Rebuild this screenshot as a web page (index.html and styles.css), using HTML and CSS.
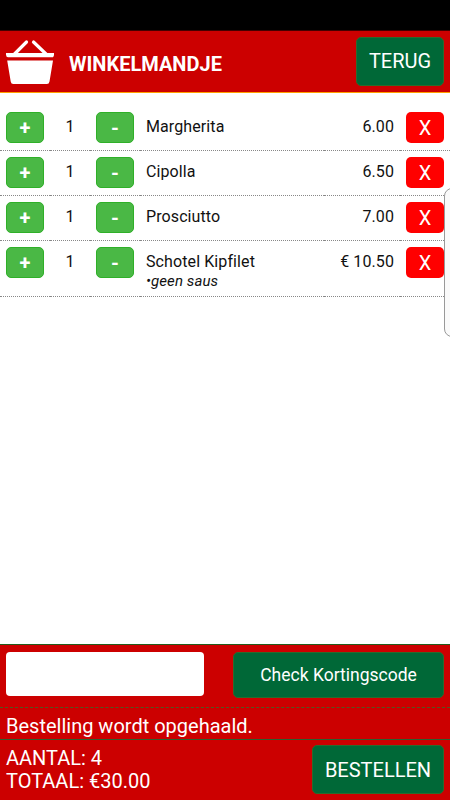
FILE: index.html
```html
<!DOCTYPE html>
<html lang="nl">
<head>
  <meta charset="UTF-8" />
  <meta name="viewport" content="width=device-width, initial-scale=1" />
  <title>Winkelmandje</title>
  <link rel="stylesheet" href="styles.css">
</head>
<body>
  <div class="statusbar"></div>

  <header class="header">
    <svg class="basket" width="50" height="46" viewBox="0 0 50 46">
      <path d="M8.500 15 L20.500 3 M40 15 L27.500 3" fill="none" stroke="#fff" stroke-width="3.200" stroke-linecap="round"/>
      <path d="M0 14h48q.3 4.300-2 4.300h-44q-2.300 0-2-4.300z" fill="#fff"/>
      <path d="M1.200 21.500h45.800l-3.500 21q-.4 2.500-2.600 2.500h-33.600q-2.200 0-2.600-2.500z" fill="#fff"/>
    </svg>
    <h1>WINKELMANDJE</h1>
    <button class="button back">TERUG</button>
  </header>

  <main class="cart">
    <div class="row">
      <div class="cell"><button class="qty">+</button></div>
      <div class="cell count">1</div>
      <div class="cell"><button class="qty">-</button></div>
      <div class="cell name">Margherita</div>
      <div class="cell price">6.00</div>
      <div class="cell"><button class="remove">X</button></div>
    </div>
    <div class="row">
      <div class="cell"><button class="qty">+</button></div>
      <div class="cell count">1</div>
      <div class="cell"><button class="qty">-</button></div>
      <div class="cell name">Cipolla</div>
      <div class="cell price">6.50</div>
      <div class="cell"><button class="remove">X</button></div>
    </div>
    <div class="row">
      <div class="cell"><button class="qty">+</button></div>
      <div class="cell count">1</div>
      <div class="cell"><button class="qty">-</button></div>
      <div class="cell name">Prosciutto</div>
      <div class="cell price">7.00</div>
      <div class="cell"><button class="remove">X</button></div>
    </div>
    <div class="row with-note">
      <div class="cell"><button class="qty">+</button></div>
      <div class="cell count">1</div>
      <div class="cell"><button class="qty">-</button></div>
      <div class="cell name">Schotel Kipfilet<div class="note">•geen saus</div></div>
      <div class="cell price">€ 10.50</div>
      <div class="cell"><button class="remove">X</button></div>
    </div>
  </main>

  <footer class="footer">
    <div class="coupon">
      <input class="code" type="text" aria-label="Kortingscode">
      <button class="button check">Check Kortingscode</button>
    </div>
    <div class="message">Bestelling wordt opgehaald.</div>
    <div class="total">
      <div class="sums">
        <div>AANTAL: 4</div>
        <div>TOTAAL: €30.00</div>
      </div>
      <button class="button order">BESTELLEN</button>
    </div>
  </footer>

  <!-- edge panel handle -->
  <div class="edge-handle"></div>
</body>
</html>
```

FILE: styles.css
```css
* {
  box-sizing: border-box;
}
body {
  margin: 0;
  height: 800px;
  display: flex;
  flex-direction: column;
  position: relative;
  overflow: hidden;
  background: #fff;
  color: #111;
  font-family: Roboto, sans-serif;
  font-size: 16px;
}
button {
  padding: 0;
  border: none;
  font-family: inherit;
  color: #fff;
}
.statusbar {
  height: 31px;
  background: #000;
  border-bottom: 1px solid #400;
}
.header {
  display: flex;
  align-items: flex-start;
  height: 62px;
  padding: 6px 6px 0 6px;
  background: #cc0000;
  border-bottom: 1px solid #ffa000;
}
.basket {
  margin-top: 2px;
}
.header h1 {
  flex: 1;
  margin: 15px 0 0 13px;
  font-size: 20px;
  line-height: 24px;
  font-weight: bold;
  color: #fff;
}
.button {
  background: #006837;
  border: 1px solid #2c6a2c;
  border-radius: 5px;
  font-size: 20px;
}
.back {
  width: 88px;
  height: 49px;
  padding-bottom: 1px;
}
.cart {
  flex: 1;
  padding-top: 13px;
}
.row {
  display: grid;
  grid-template-columns: 50px 40px 50px 184px 76px 50px;
  height: 45px;
}
.row.with-note {
  height: 56px;
}
.cell {
  padding: 6px 6px 0 6px;
  border-bottom: 1px dotted #888;
  letter-spacing: 0.1px;
  line-height: 19px;
}
.cell.count {
  padding: 11px 0 0 0;
  text-align: center;
}
.cell.name {
  padding-top: 11px;
}
.cell.price {
  padding-top: 11px;
  text-align: right;
}
.note {
  padding-top: 1px;
  font-size: 15px;
  font-style: italic;
}
.qty, .remove {
  display: block;
  width: 38px;
  height: 31px;
  border-radius: 5px;
  font-size: 20px;
}
.qty {
  background: #4ab845;
  border: 1px solid #2fb028;
  font-weight: bold;
}
.remove {
  background: #ff0000;
}
.footer {
  height: 156px;
  background: #cc0000;
  border-top: 1px solid #245a1c;
  color: #fff;
  font-size: 20px;
}
.coupon {
  display: flex;
  justify-content: space-between;
  align-items: flex-start;
  height: 63px;
  padding: 7px 6px 0 6px;
  border-bottom: 1px dashed #4f5a20;
}
.code {
  width: 198px;
  height: 44px;
  border: none;
  border-radius: 4px;
  background: #fff;
}
.check {
  width: 211px;
  height: 46px;
  padding-bottom: 1px;
  font-size: 17.5px;
}
.message {
  height: 32px;
  padding: 6px 6px 0 6px;
  border-bottom: 1px solid #2c6030;
  line-height: 24px;
}
.total {
  display: flex;
  justify-content: space-between;
  align-items: flex-start;
  padding: 5px 6px 0 6px;
}
.sums {
  padding-top: 2px;
  line-height: 23px;
}
.order {
  width: 132px;
  height: 49px;
}
.edge-handle {
  position: absolute;
  top: 188px;
  right: -10px;
  width: 16px;
  height: 149px;
  background: #fafafa;
  border: 1px solid #999;
  border-radius: 8px;
}
```
